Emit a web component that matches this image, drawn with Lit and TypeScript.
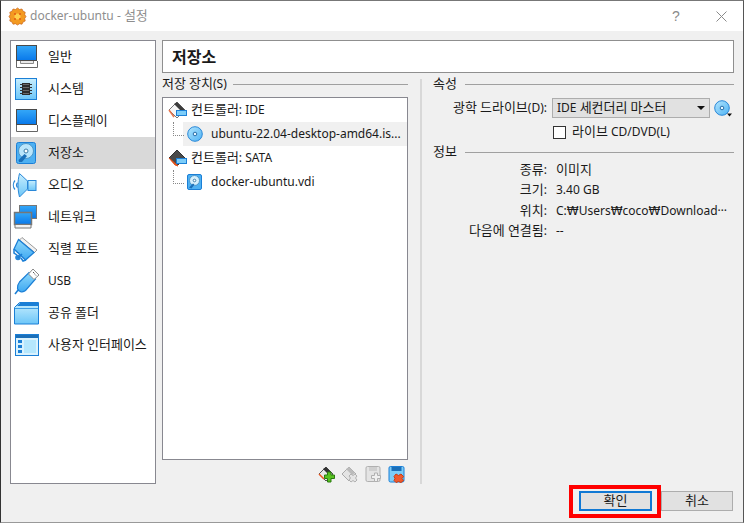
import { LitElement, html, css, svg } from "lit";
import { customElement } from "lit/decorators.js";

const icons: Record<string, unknown> = {
  general: svg`<rect x="1.500" y="0.500" width="20" height="15" fill="url(#scr)" stroke="#4a4a4a"/><path d="M1.500 16v6.500h21V16" fill="#fff" stroke="#666"/><path d="M5.500 16v2.500h13V16" fill="#e8e8e8" stroke="#8a8a8a"/>`,
  system: svg`<rect x="0.500" y="1.500" width="21" height="21" fill="url(#sky)" stroke="#1b7fd6"/><rect x="7" y="6" width="8" height="12" fill="#2d2d2d"/><path d="M5 7.500h12M5 10.500h12M5 13.500h12M5 16.500h12" stroke="#333"/><path d="M8 7.500h6M8 10.500h6M8 13.500h6M8 16.500h6" stroke="#6a6a6a"/>`,
  display: svg`<rect x="1.500" y="0.500" width="20" height="15" fill="url(#scr)" stroke="#4a4a4a"/><path d="M1.500 16v6.500h21V16" fill="#fff" stroke="#666"/>`,
  storage: svg`<rect x="1.500" y="1.500" width="19" height="21" rx="2" fill="#4db0f2" stroke="#1b7fd6"/><circle cx="11" cy="10" r="7.500" fill="#b9e5fb" stroke="#4d97c9"/><circle cx="11" cy="10" r="2" fill="#fff" stroke="#3d7da8"/><path d="M3.500 19l6-6 2.500 2-5 6H4z" fill="#1b6fb8"/>`,
  audio: svg`<path d="M4.500 0.500L12.500 8v8l-8 8c-2-8-2-16 0-23.500z" fill="url(#sky)" stroke="#2a88d8"/><rect x="13" y="7.500" width="8" height="10" fill="url(#sky)" stroke="#2a88d8"/><path d="M0 7.500a7 7 0 0 0 0 9M2.500 9.500a4 4 0 0 0 0 5" fill="none" stroke="#2a88d8" stroke-width="1.200"/>`,
  network: svg`<rect x="4.500" y="0.500" width="17" height="13" fill="url(#scr)" stroke="#777"/><rect x="-0.500" y="7.500" width="17" height="12" fill="url(#scr)" stroke="#777" stroke-width="1.500"/><path d="M0 20v3h16v-3" fill="#f2f2f2" stroke="#777"/>`,
  serial: svg`<path d="M7 0.500l15 12.500-2.500 2.500-15-12.500z" fill="#f2f2f2" stroke="#9a9a9a"/><path d="M3.500 2.500l15.500 13-8.500 7.500L-1 12z" fill="url(#deep)" stroke="#1b7fd6" stroke-width="1.300"/><circle cx="3" cy="20.500" r="2.800" fill="#2a88d8"/><path d="M3 21l4-4M-1 12l0 4 3 2M11 23l-3 1-2-3" fill="none" stroke="#1b7fd6" stroke-width="1.500"/>`,
  usb: svg`<path d="M14 3.500l6.500 6.500-10 11.500c-3 2.500-7.500 1-8-2-.5-2.500.5-4.500 2-6.500z" fill="url(#deep)" stroke="#1b7fd6" stroke-width="1.200"/><path d="M13.500 5l4.500-5 6 6-5 4.500z" fill="#fff" stroke="#8a8a8a"/><path d="M18 3l1.500 1.500M20 5.500l1 1" stroke="#555"/><path d="M3.500 20.500l-3.500 4.500" stroke="#1b7fd6" stroke-width="1.600"/>`,
  shared: svg`<path d="M-.5 23V6.500L4.500 1.500h19V23z" fill="url(#sky)" stroke="#1b7fd6"/><path d="M5 2h18v3H2z" fill="#1b7fd6"/><path d="M0 7h23v1H0z" fill="#3d9de4"/>`,
  ui: svg`<rect x="0.500" y="1.500" width="23" height="21" fill="#d9f2fe" stroke="#1b7fd6"/><rect x="1" y="2" width="22" height="3" fill="#1b6fb8"/><rect x="3" y="7" width="4" height="3" fill="#1b7fd6"/><rect x="3" y="12" width="4" height="3" fill="#1b7fd6"/><rect x="3" y="17" width="4" height="3" fill="#1b7fd6"/><rect x="9" y="7" width="12" height="13" fill="#b5e7fd"/>`,
  ctlIde: svg`<path d="M9 1l8 8-8 8-8-8z" fill="#f6f6f6" stroke="#777"/><path d="M9 1l8 8-3 2-8-8z" fill="#3c3c3c"/><path d="M1 9l5 7" stroke="#e8734a" stroke-width="1.500"/><rect x="8.500" y="9.500" width="10" height="5" fill="#7ccdf9" stroke="#1b7fd6"/>`,
  ctlSata: svg`<path d="M9 1l8 8-8 8-8-8z" fill="#4a4a4a" stroke="#333"/><path d="M1 9l6 7 3 1-9-8z" fill="#e8561f" stroke="#e8561f"/><rect x="8.500" y="9.500" width="10" height="5" fill="#7ccdf9" stroke="#1b7fd6"/>`,
  disc: svg`<circle cx="8" cy="8" r="7.300" fill="url(#sky2)" stroke="#2a88d8"/><circle cx="8" cy="8" r="1.800" fill="#e8f6ff" stroke="#2a6fa8"/>`,
  discMenu: svg`<circle cx="8" cy="8" r="7.300" fill="url(#sky2)" stroke="#2a88d8"/><circle cx="8" cy="8" r="1.800" fill="#e8f6ff" stroke="#2a6fa8"/><path d="M13 13.500h5l-2.500 3z" fill="#111"/>`,
  hdd: svg`<rect x="0.500" y="0.500" width="14" height="15" rx="1.500" fill="#4db0f2" stroke="#1b7fd6"/><circle cx="7.500" cy="6.500" r="5" fill="#d5effc" stroke="#4d97c9"/><circle cx="7.500" cy="6.500" r="1.300" fill="#fff" stroke="#3d7da8"/><path d="M2 13.500l4-4 1.500 1-3 4z" fill="#1b6fb8"/>`,
  addCtl: svg`<path d="M7 1l7 7-7 7-7-7z" fill="#e8e8e8" stroke="#555"/><path d="M7 1l6 6-3 2-6-6z" fill="#333"/><path d="M0 8l5 5" stroke="#e8561f" stroke-width="1.500"/><path d="M8.500 6h3.500v3h3.500v3.500h-3.500v3.500h-3.500v-3.500h-3v-3.500h3z" fill="#58c21f" stroke="#2b7a10"/>`,
  rmCtl: svg`<path d="M7 1l7 7-7 7-7-7z" fill="#e4e4e4" stroke="#aaa"/><path d="M7 1l6 6-3 2-6-6z" fill="#bbb"/><path d="M9 8l2 1.500 2-1.500 2 2-1.500 2 1.500 2-2 2-2-1.500-2 1.500-2-2 1.500-2-1.500-2z" fill="#e5e5e5" stroke="#b0b0b0"/>`,
  addAtt: svg`<rect x="1" y="0.500" width="14" height="15" rx="1.500" fill="#e4e4e4" stroke="#b0b0b0"/><rect x="4" y="1" width="8" height="4" fill="#cfcfcf"/><path d="M9.500 7h3v2.500h3v3h-3v3h-3v-3h-3v-3h3z" fill="#f0f0f0" stroke="#b0b0b0"/>`,
  rmAtt: svg`<rect x="1" y="0.500" width="15" height="15.500" rx="1.500" fill="#7ccdf9" stroke="#1b7fd6"/><rect x="3.500" y="1" width="10" height="4" fill="#1b6fb8"/><path d="M8 8l2.500 1.500 2.500-1.500 2.500 2.500-1.500 2 1.500 2-2.500 2-2.500-1-2.500 1-2-2 1-2-1-2z" fill="#ef5a2e" stroke="#c93c12"/>`,
  logo: svg`<path d="M8.500 0l2 1.500 2.500-.5 1 2.200 2.200 1-.5 2.500 1.300 1.800-1.300 2 .5 2.500-2.200 1-1 2.200-2.500-.5-2 1.300-2-1.300-2.500.5-1-2.200-2.200-1 .5-2.500L0 8.500l1.300-1.800L.8 4.200l2.200-1 1-2.200 2.500.5z" fill="#f39a21" stroke="#c8631a" stroke-width=".7"/><circle cx="8.500" cy="8.500" r="3" fill="#ffcf4a"/><circle cx="6" cy="6" r="1" fill="#e25b12"/><circle cx="11" cy="6" r="1" fill="#e25b12"/><circle cx="6" cy="11" r="1" fill="#e25b12"/><circle cx="11" cy="11" r="1" fill="#e25b12"/>`,
};

const icon = (n: string, w: number, h: number, vw = w, vh = h) =>
  html`<svg class="ico" width=${w} height=${h} viewBox="0 0 ${vw} ${vh}">${icons[n]}</svg>`;

/* Hangul is drawn a pixel larger than Latin, as in the reference's Korean system font. */
const t = (s: string) =>
  s.split(/([\uAC00-\uD7A3]+|₩)/).map((p) =>
    /[\uAC00-\uD7A3]/.test(p) ? html`<span class="k">${p}</span>` : p === "₩" ? html`<span class="won">₩</span>` : p
  );

const nav: [string, string][] = [
  ["general", "일반"], ["system", "시스템"], ["display", "디스플레이"], ["storage", "저장소"],
  ["audio", "오디오"], ["network", "네트워크"], ["serial", "직렬 포트"], ["usb", "USB"],
  ["shared", "공유 폴더"], ["ui", "사용자 인터페이스"],
];

const info: [string, unknown][] = [
  ["종류:", t("이미지")],
  ["크기:", "3.40 GB"],
  ["위치:", html`${t("C:₩Users₩coco₩Download")}<span class="ell">…</span>`],
  ["다음에 연결됨:", "--"],
];

@customElement("app-root")
export class AppRoot extends LitElement {
  static styles = css`
    :host { display: block; width: 744px; height: 523px; overflow: hidden; background: #f0f0f0;
      font: 12px/16px "Noto Sans", "Noto Sans CJK KR", sans-serif; color: #1a1a1a; }
    * { box-sizing: border-box; }
    .k { font: 13px/1 "Noto Sans CJK KR", sans-serif; }
    .won { font: 12px/1 "DejaVu Sans", sans-serif; }
    .ell { vertical-align: 4px; line-height: 1; }
    .ico { display: block; flex: none; overflow: visible; }
    .defs { position: absolute; width: 0; height: 0; }
    .win { height: 523px; display: flex; flex-direction: column; border: 1px solid #555; border-color: #777 #555 #999 #333; }
    .title { height: 30px; background: #fff; display: flex; align-items: center; padding-left: 8px; color: #8e8e8e; flex: none; }
    .title .t { margin-left: 4px; flex: 1; }
    .title .q { width: 10px; font: 14px "Liberation Sans", sans-serif; color: #8a8a8a; margin-right: 35px; text-align: center; }
    .x { margin-right: 16px; }
    .main { height: 454px; display: flex; padding: 9px 9px 0 9px; gap: 6px; flex: none; }
    .side { width: 146px; height: 444px; background: #fff; border: 1px solid #888890; flex: none; }
    .row { height: 32px; display: flex; align-items: center; padding-left: 4px; }
    .row .lbl { margin-left: 9px; }
    .row.sel { background: #d9d9d9; }
    .content { flex: 1; display: flex; flex-direction: column; min-width: 0; }
    .head { height: 33px; border: 1px solid #8f8f8f; background: #fff; font: 700 16px/30px "Noto Sans CJK KR", sans-serif; padding-left: 9px; flex: none; }
    .panes { display: flex; flex: 1; min-height: 0; padding-top: 3px; }
    .left { width: 246px; flex: none; display: flex; flex-direction: column; }
    .legend { display: flex; align-items: center; gap: 6px; height: 16px; }
    .legend i { flex: 1; height: 1px; background: #a0a0a0; }
    .right .legend { gap: 8px; }
    .right .legend.info { margin-top: 4px; }
    .tree { height: 363px; margin-top: 5px; border: 1px solid #888890; background: #fff; flex: none; }
    .node { height: 24px; display: flex; align-items: center; }
    .node.ctl { padding-left: 5px; }
    .node.ctl .lbl { margin-left: 5px; }
    .node.sel { background: #f0f0f0; }
    .node.sel, .node.sub { margin-left: 20px; padding-left: 4px; }
    .node .name { margin-left: 8px; white-space: nowrap; }
    .node.sub .name { margin-left: 10px; }
    .att { position: relative; }
    .att::before { content: ""; position: absolute; left: -14px; top: -4px; width: 10px; height: 13px; border-left: 1px dotted #888; border-bottom: 1px dotted #888; }
    .tools { display: flex; justify-content: flex-end; gap: 7px; padding: 6px 4px 0 0; }
    .vdiv { width: 2px; height: 405px; background: #d8d8d8; margin: 3px 0 0 12px; flex: none; }
    .right { flex: 1; padding-left: 11px; min-width: 0; }
    .form, .kv { display: grid; grid-template-columns: 114px 1fr; column-gap: 5px; }
    .lab { text-align: right; height: 20px; line-height: 20px; white-space: nowrap; }
    .lab.first { margin-top: 6px; }
    .kv .lab, .kv .v { height: 20.33px; line-height: 20.33px; }
    .combo { display: flex; align-items: center; gap: 4px; margin-top: 6px; }
    .sel-box { width: 158px; height: 20px; background: #e1e1e1; border: 1px solid #adadad; display: flex; align-items: center; padding: 0 4px; justify-content: space-between; }
    .sel-box b { width: 0; height: 0; border-left: 4px solid transparent; border-right: 4px solid transparent; border-top: 4px solid #111; }
    .check { display: flex; align-items: center; gap: 6px; margin: 6px 0 0 1px; height: 16px; }
    .check i { width: 13px; height: 13px; border: 1px solid #333; background: #fff; }
    .v { white-space: nowrap; padding-left: 4px; }
    .foot { flex: 1; display: flex; justify-content: flex-end; align-items: flex-start; padding-right: 10px; }
    .ok { width: 92px; height: 33px; border: 4px solid #f00; padding: 2px 5px 0 6px; }
    .ok div { height: 20px; background: #e1e1e1; border: 2px solid #0f78d4; text-align: center; line-height: 16px; }
    .cancel { width: 72px; height: 20px; margin-top: 6px; background: #e1e1e1; border: 1px solid #adadad; text-align: center; line-height: 18px; }
  `;

  render() {
    return html`<div class="win">
      <svg class="defs"><defs>
        <linearGradient id="scr" x1="0" y1="0" x2="0" y2="1"><stop offset="0" stop-color="#35a8f8"/><stop offset="1" stop-color="#0878ea"/></linearGradient>
        <linearGradient id="sky" x1="0" y1="0" x2="0" y2="1"><stop offset="0" stop-color="#c8eefe"/><stop offset="1" stop-color="#6cc6f8"/></linearGradient>
        <linearGradient id="sky2" x1="0" y1="0" x2="1" y2="1"><stop offset="0" stop-color="#b4e6fd"/><stop offset="1" stop-color="#4db2f4"/></linearGradient>
        <linearGradient id="deep" x1="0" y1="0" x2="0" y2="1"><stop offset="0" stop-color="#8ed8fb"/><stop offset="1" stop-color="#3fa9f2"/></linearGradient>
      </defs></svg>
      <div class="title">${icon("logo", 17, 17)}<span class="t">${t("docker-ubuntu - 설정")}</span><span class="q">?</span>
        <svg class="ico x" width="11" height="11" viewBox="0 0 11 11"><path d="M.5 .5l10 10M10.500 .5l-10 10" stroke="#8a8a8a" fill="none"/></svg></div>
      <div class="main">
        <div class="side">${nav.map(([k, s]) => html`<div class="row ${k === "storage" ? "sel" : ""}">${icon(k, 24, 24)}<span class="lbl">${t(s)}</span></div>`)}</div>
        <div class="content">
          <div class="head">저장소</div>
          <div class="panes">
            <div class="left">
              <div class="legend"><span>${t("저장 장치(S)")}</span><i></i></div>
              <div class="tree">
                <div class="node ctl">${icon("ctlIde", 18, 18)}<span class="lbl">${t("컨트롤러: IDE")}</span></div>
                <div class="node sel"><div class="att">${icon("disc", 16, 16)}</div><span class="name">ubuntu-22.04-desktop-amd64.is...</span></div>
                <div class="node ctl">${icon("ctlSata", 18, 18)}<span class="lbl">${t("컨트롤러: SATA")}</span></div>
                <div class="node sub"><div class="att">${icon("hdd", 14, 16)}</div><span class="name">docker-ubuntu.vdi</span></div>
              </div>
              <div class="tools">${icon("addCtl", 16, 16)}${icon("rmCtl", 16, 16)}${icon("addAtt", 16, 16)}${icon("rmAtt", 16, 16)}</div>
            </div>
            <div class="vdiv"></div>
            <div class="right">
              <div class="legend"><span>${t("속성")}</span><i></i></div>
              <div class="form">
                <div class="lab first">${t("광학 드라이브(D):")}</div>
                <div class="combo"><div class="sel-box"><span>${t("IDE 세컨더리 마스터")}</span><b></b></div>${icon("discMenu", 17, 17, 17, 17)}</div>
                <div></div>
                <label class="check"><i></i><span>${t("라이브 CD/DVD(L)")}</span></label>
              </div>
              <div class="legend info"><span>${t("정보")}</span><i></i></div>
              <div class="kv">
                ${info.map(([a, b]) => html`<div class="lab">${t(a as string)}</div><div class="v">${b}</div>`)}
              </div>
            </div>
          </div>
        </div>
      </div>
      <div class="foot"><div class="ok"><div>${t("확인")}</div></div><div class="cancel">${t("취소")}</div></div>
    </div>`;
  }
}
